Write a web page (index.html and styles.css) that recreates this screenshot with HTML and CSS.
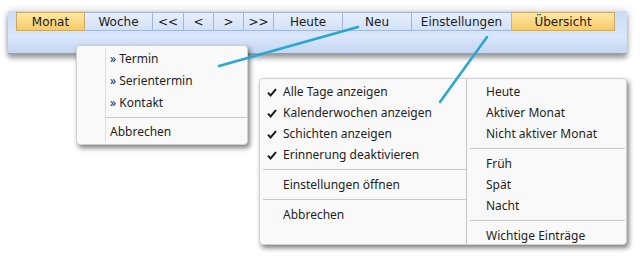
FILE: index.html
```html
<!DOCTYPE HTML>
<html lang="de">
<head>
    <meta charset="UTF-8">
    <title>Kalender Menüs</title>
    <link rel="stylesheet" href="styles.css">
</head>
<body>
<div class="stage">
    <div class="toolbar">
        <div class="toolButtons">
            <a class="toolBtn on w69">Monat</a>
            <a class="toolBtn w68">Woche</a>
            <a class="toolBtn w31">&lt;&lt;</a>
            <a class="toolBtn w30">&lt;</a>
            <a class="toolBtn w30">&gt;</a>
            <a class="toolBtn w30">&gt;&gt;</a>
            <a class="toolBtn w69">Heute</a>
            <a class="toolBtn w69">Neu</a>
            <a class="toolBtn w100">Einstellungen</a>
            <a class="toolBtn on w103">Übersicht</a>
        </div>
    </div>

    <div class="menu menuNew">
        <div class="menuItem">» Termin</div>
        <div class="menuItem">» Serientermin</div>
        <div class="menuItem">» Kontakt</div>
        <div class="menuSep"></div>
        <div class="menuItem">Abbrechen</div>
    </div>

    <div class="menu menuSettings">
        <div class="menuCol colLeft">
            <div class="menuItem checked"><svg class="check" width="10" height="9" viewBox="0 0 10 9"><path d="M1 4.6 L3.6 7.4 L9 1.2" fill="none" stroke="#1a1a1a" stroke-width="2"/></svg>Alle Tage anzeigen</div>
            <div class="menuItem checked"><svg class="check" width="10" height="9" viewBox="0 0 10 9"><path d="M1 4.6 L3.6 7.4 L9 1.2" fill="none" stroke="#1a1a1a" stroke-width="2"/></svg>Kalenderwochen anzeigen</div>
            <div class="menuItem checked"><svg class="check" width="10" height="9" viewBox="0 0 10 9"><path d="M1 4.6 L3.6 7.4 L9 1.2" fill="none" stroke="#1a1a1a" stroke-width="2"/></svg>Schichten anzeigen</div>
            <div class="menuItem checked"><svg class="check" width="10" height="9" viewBox="0 0 10 9"><path d="M1 4.6 L3.6 7.4 L9 1.2" fill="none" stroke="#1a1a1a" stroke-width="2"/></svg>Erinnerung deaktivieren</div>
            <div class="menuSep"></div>
            <div class="menuItem">Einstellungen öffnen</div>
            <div class="menuSep"></div>
            <div class="menuItem">Abbrechen</div>
        </div>
        <div class="menuCol colRight">
            <div class="menuItem">Heute</div>
            <div class="menuItem">Aktiver Monat</div>
            <div class="menuItem">Nicht aktiver Monat</div>
            <div class="menuSep"></div>
            <div class="menuItem">Früh</div>
            <div class="menuItem">Spät</div>
            <div class="menuItem">Nacht</div>
            <div class="menuSep"></div>
            <div class="menuItem">Wichtige Einträge</div>
        </div>
    </div>

    <!-- annotation strokes -->
    <svg class="pointers" width="643" height="261" viewBox="0 0 643 261">
        <line x1="358" y1="27" x2="219" y2="66" stroke="#2aa7d2" stroke-width="2.6" stroke-linecap="round"/>
        <line x1="487" y1="37" x2="440" y2="102" stroke="#2aa7d2" stroke-width="2.6" stroke-linecap="round"/>
    </svg>
</div>
</body>
</html>
```

FILE: styles.css
```css
body {
    margin: 0;
    background: #fff;
}
.stage {
    position: relative;
    width: 643px;
    height: 261px;
    overflow: hidden;
}
.toolbar {
    margin: 11px 0 0 8px;
    width: 619px;
    height: 42px;
    background: linear-gradient(#c9dbf6, #dae7fb 60%, #c4d6f2);
    border-bottom: 1px solid #8ea3c2;
    box-shadow: 0 0 8px rgba(0,0,0,.18), 0 4px 5px rgba(0,0,0,.35);
}
.toolButtons {
    display: flex;
    padding: 1px 0 0 8px;
}
.toolBtn {
    display: block;
    box-sizing: border-box;
    height: 19px;
    line-height: 18px;
    text-align: center;
    font-family: "DejaVu Sans", Verdana, sans-serif;
    font-size: 12px;
    color: #1c1c1c;
    background: linear-gradient(#e6eefb, #d3e1f7);
    border: 1px solid #a3b8d8;
    border-left: none;
}
.toolBtn:first-child {
    border-left: 1px solid #a3b8d8;
}
.toolBtn.on {
    background: linear-gradient(#fde6a4, #f8cb68);
    border-color: #c8ab6a;
}
.w30 { width: 30px; }
.w31 { width: 31px; }
.w68 { width: 68px; }
.w69 { width: 69px; }
.w100 { width: 100px; }
.w103 { width: 103px; }

.menu {
    position: absolute;
    box-sizing: border-box;
    background: #f9f9f9;
    border: 1px solid #d0d0d0;
    border-radius: 4px;
    box-shadow: 2px 3px 5px rgba(0,0,0,.5);
    font-family: "Noto Sans", "Open Sans", sans-serif;
    font-size: 12px;
    color: #1e1e1e;
}
.menuItem {
    height: 21px;
    line-height: 21px;
    white-space: nowrap;
}
.menuSep {
    height: 1px;
    margin: 4px 0;
    background: #c9c9c9;
}

.menuNew {
    left: 76px;
    top: 45px;
    width: 172px;
    height: 100px;
    padding-top: 2px;
}
.menuNew::before {
    content: "";
    position: absolute;
    left: 28px;
    top: 2px;
    bottom: 2px;
    width: 1px;
    background: #dedede;
}
.menuNew .menuItem {
    height: 22px;
    line-height: 22px;
    padding-left: 33px;
}
.menuNew .menuSep {
    margin: 3px 0 3px 29px;
}

.menuSettings {
    left: 259px;
    top: 78px;
    width: 368px;
    height: 167px;
    display: flex;
}
.menuCol {
    padding-top: 2px;
}
.colLeft {
    width: 203px;
    padding-left: 3px;
}
.colLeft .menuItem {
    padding-left: 20px;
    position: relative;
}
.colLeft .check {
    position: absolute;
    left: 4px;
    top: 7px;
}
.colRight {
    flex: 1;
    border-left: 1px solid #c4c4c4;
    padding-left: 3px;
    padding-right: 1px;
}
.colRight .menuItem {
    padding-left: 16px;
}

.pointers {
    position: absolute;
    left: 0;
    top: 0;
}
```
